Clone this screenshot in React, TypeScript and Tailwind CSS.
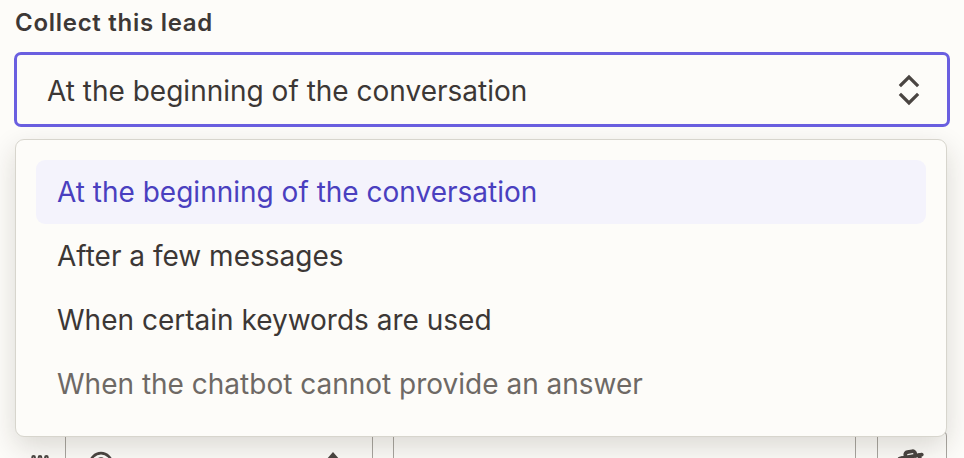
import { GripVertical, CircleHelp, Trash2 } from 'lucide-react';

const options = [
  { label: 'At the beginning of the conversation', state: 'active' },
  { label: 'After a few messages', state: 'normal' },
  { label: 'When certain keywords are used', state: 'normal' },
  { label: 'When the chatbot cannot provide an answer', state: 'muted' },
];

function UpDown() {
  return (
    <svg width="24" height="36" viewBox="0 0 24 36" fill="none" stroke="#4a4542" strokeWidth="3.2" strokeLinecap="square" strokeLinejoin="miter">
      <path d="M4 13 L12 5 L20 13" />
      <path d="M4 23 L12 31 L20 23" />
    </svg>
  );
}

export default function App() {
  return (
    <div
      className="relative w-[964px] h-[458px] overflow-hidden bg-[#fdfcf9] text-[#3c3735]"
      style={{ fontFamily: 'Inter, "Noto Sans", sans-serif' }}
    >
      <div className="px-[14px] pt-[7px]">
        <p className="pl-[1px] text-[24px] font-semibold leading-[32px] tracking-[0.03em] text-[#3d3836]">Collect this lead</p>

        <div className="mt-[13px] flex h-[75px] items-center justify-between rounded-[7px] border-[3px] border-[#6a5fe0] bg-[#fdfcf9] pl-[30px] pr-[26px]">
          <span className="pt-[3px] text-[28px] leading-none text-[#3c3735]">At the beginning of the conversation</span>
          <UpDown />
        </div>

        {/* row behind the open menu */}
        <div className="mt-[303px] flex h-[40px] pl-[1px]">
          <div className="flex w-[51px] items-start justify-center border-r-[1.5px] border-[#a9a6a0] pt-[19px] text-[#4a4542]">
            <GripVertical size={22} strokeWidth={3} className="rotate-90" />
          </div>
          <div className="flex w-[307px] items-start justify-between border-r-[1.5px] border-[#a9a6a0] pl-[22px] pr-[32px] pt-[21px] text-[#4a4542]">
            <CircleHelp size={26} strokeWidth={2.5} />
            <svg width="14" height="10" viewBox="0 0 14 10" className="mt-[1px]">
              <path d="M7 0 L14 8 L0 8 Z" fill="#4a4542" />
            </svg>
          </div>
          <div className="ml-[20px] w-[463px] border-x-[1.5px] border-[#a9a6a0]" />
          <div className="ml-[21px] flex w-[70px] items-start justify-center rounded-tr-[6px] border-x-[1.5px] border-t-[1.5px] border-[#a9a6a0] pt-[18px] text-[#4a4542]">
            <Trash2 size={30} strokeWidth={3} className="-rotate-[10deg]" />
          </div>
        </div>
      </div>

      <div className="absolute left-[15px] top-[139px] h-[298px] w-[932px] rounded-[9px] border-[1.5px] border-[#d7d5cd] bg-[#fdfcf9] px-[20px] py-[20px] shadow-[0_10px_28px_rgba(40,30,20,0.16)]">
        <ul className="flex flex-col">
          {options.map((o) => (
            <li
              key={o.label}
              className={
                o.state === 'active'
                  ? 'flex h-[64px] items-center rounded-[9px] bg-[#f4f3fc] px-[21px] text-[28px] text-[#4a3fbf]'
                  : o.state === 'muted'
                  ? 'flex h-[64px] items-center px-[21px] text-[28px] text-[#6e6965]'
                  : 'flex h-[64px] items-center px-[21px] text-[28px] text-[#3c3735]'
              }
            >
              {o.label}
            </li>
          ))}
        </ul>
      </div>
    </div>
  );
}
